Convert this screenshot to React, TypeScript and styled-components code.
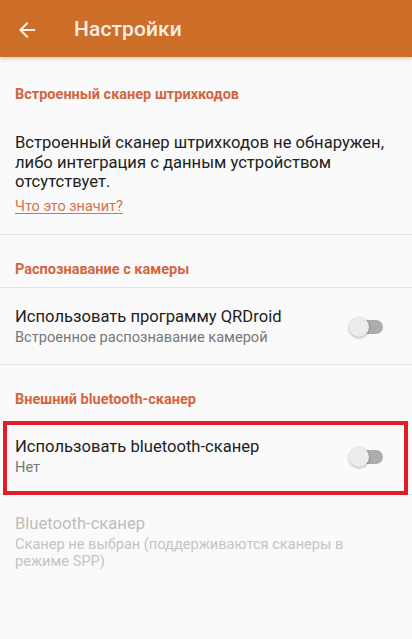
import React from "react";
import styled, { createGlobalStyle } from "styled-components";

const Global = createGlobalStyle`
  html, body { margin: 0; padding: 0; background: #fafafa; }
  body { font-family: Roboto, "Noto Sans", "Liberation Sans", sans-serif; -webkit-font-smoothing: antialiased; }
  * { box-sizing: border-box; }
`;

const Screen = styled.div`
  width: 412px;
  height: 639px;
  background: #fafafa;
  overflow: hidden;
  display: flex;
  flex-direction: column;
`;

const Toolbar = styled.header`
  height: 57px;
  flex: none;
  background: #cd6f28;
  display: flex;
  align-items: center;
  padding-left: 15px;
  gap: 35px;
  box-shadow: 0 2px 4px rgba(0, 0, 0, 0.18);
  position: relative;
  z-index: 1;
`;

const BackButton = styled.span`
  width: 24px;
  height: 24px;
  display: flex;
  color: #fdf1e8;
  margin-top: 2px;
`;

const Title = styled.h1`
  margin: 0;
  font-size: 21px;
  font-weight: 500;
  color: #fbeee4;
  letter-spacing: 0.1px;
`;

const Content = styled.main`
  display: flex;
  flex-direction: column;
`;

const CategoryTitle = styled.div<{ $top: number; $bottom: number; $divider?: boolean }>`
  padding: ${(p) => p.$top}px 15px ${(p) => p.$bottom}px;
  font-size: 14.5px;
  line-height: 20px;
  font-weight: 700;
  color: #d4653f;
  border-bottom: ${(p) => (p.$divider ? "1px solid #e3e3e3" : "none")};
`;

const InfoBlock = styled.div`
  padding: 0 15px 17px;
  border-bottom: 1px solid #e3e3e3;
`;

const InfoText = styled.p`
  margin: 0;
  font-size: 16.6px;
  line-height: 19.5px;
  color: #212121;
`;

const InfoLink = styled.a`
  display: inline-block;
  margin-top: 5px;
  font-size: 14.5px;
  line-height: 20px;
  color: #d6714f;
  text-decoration: underline;
  text-underline-offset: 2px;
`;

const PrefRow = styled.div<{ $divider?: boolean; $highlighted?: boolean }>`
  position: relative;
  display: flex;
  align-items: center;
  padding: 19px 29px 17.5px 15px;
  border-bottom: ${(p) => (p.$divider ? "1px solid #e3e3e3" : "none")};

  ${(p) =>
    p.$highlighted &&
    `
    &::after {
      content: "";
      position: absolute;
      left: 3px;
      right: 4px;
      top: 3px;
      bottom: -1px;
      border: 4px solid #e11d2a;
      pointer-events: none;
    }
  `}
`;

const PrefText = styled.div`
  flex: 1;
  display: flex;
  flex-direction: column;
  gap: 2px;
`;

const PrefTitle = styled.div<{ $disabled?: boolean }>`
  font-size: 16.6px;
  line-height: 20px;
  color: ${(p) => (p.$disabled ? "#bdbdbd" : "#212121")};
`;

const PrefSummary = styled.div<{ $disabled?: boolean }>`
  font-size: 14.6px;
  line-height: 17.5px;
  color: ${(p) => (p.$disabled ? "#c4c4c4" : "#777777")};
`;

const SwitchTrack = styled.span`
  position: relative;
  width: 31px;
  height: 14px;
  border-radius: 7px;
  background: #acacac;
  flex: none;
  margin-top: 1px;
`;

const SwitchThumb = styled.span`
  position: absolute;
  left: -3px;
  top: -3px;
  width: 20px;
  height: 20px;
  border-radius: 50%;
  background: #ececec;
  box-shadow: 0 1px 3px rgba(0, 0, 0, 0.3);
`;

const Toggle = () => (
  <SwitchTrack>
    <SwitchThumb />
  </SwitchTrack>
);

export default function App() {
  return (
    <>
      <Global />
      <Screen>
        <Toolbar>
          <BackButton>
            <svg width="24" height="24" viewBox="0 0 24 24" fill="currentColor">
              <path d="M20 11H7.83l5.59-5.59L12 4l-8 8 8 8 1.41-1.41L7.83 13H20v-2z" />
            </svg>
          </BackButton>
          <Title>Настройки</Title>
        </Toolbar>
        <Content>
          <CategoryTitle $top={28} $bottom={28}>
            Встроенный сканер штрихкодов
          </CategoryTitle>
          <InfoBlock>
            <InfoText>
              Встроенный сканер штрихкодов не обнаружен, либо интеграция с данным устройством
              отсутствует.
            </InfoText>
            <InfoLink>Что это значит?</InfoLink>
          </InfoBlock>
          <CategoryTitle $top={25} $bottom={7} $divider>
            Распознавание с камеры
          </CategoryTitle>
          <PrefRow $divider>
            <PrefText>
              <PrefTitle>Использовать программу QRDroid</PrefTitle>
              <PrefSummary>Встроенное распознавание камерой</PrefSummary>
            </PrefText>
            <Toggle />
          </PrefRow>
          <CategoryTitle $top={25} $bottom={8}>
            Внешний bluetooth-сканер
          </CategoryTitle>
          <PrefRow $divider $highlighted>
            <PrefText>
              <PrefTitle>Использовать bluetooth-сканер</PrefTitle>
              <PrefSummary>Нет</PrefSummary>
            </PrefText>
            <Toggle />
          </PrefRow>
          <PrefRow>
            <PrefText>
              <PrefTitle $disabled>Bluetooth-сканер</PrefTitle>
              <PrefSummary $disabled>
                Сканер не выбран (поддерживаются сканеры в режиме SPP)
              </PrefSummary>
            </PrefText>
          </PrefRow>
        </Content>
      </Screen>
    </>
  );
}
